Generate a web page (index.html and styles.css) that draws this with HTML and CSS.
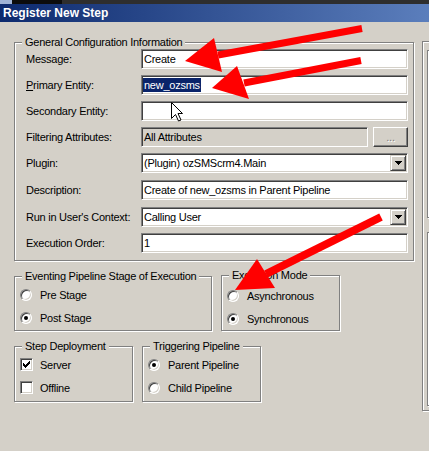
FILE: index.html
```html
<!DOCTYPE html>
<html>
<head>
<meta charset="utf-8">
<title>Register New Step</title>
<link rel="stylesheet" href="styles.css">
</head>
<body>
<div class="window">
  <div class="topstrip"></div>
  <div class="titlebar">Register New Step</div>
  <div class="client">
    <div class="leftcol">
      <fieldset class="group general">
        <legend>General Configuration Information</legend>
        <div class="rows">
          <div class="row"><span class="label">Message:</span><div class="field"><span class="val">Create</span></div></div>
          <div class="row"><span class="label"><u>P</u>rimary Entity:</span><div class="field"><span class="val sel">new_ozsms</span></div></div>
          <div class="row"><span class="label">Secondary Entity:</span><div class="field"></div></div>
          <div class="row"><span class="label">Filtering Attributes:</span>
            <div class="pair"><div class="field disabled"><span class="val">All Attributes</span></div><div class="btn">...</div></div>
          </div>
          <div class="row"><span class="label">Plugin:</span>
            <div class="field combo"><span class="val">(Plugin) ozSMScrm4.Main</span>
              <span class="dropbtn"><svg width="7" height="4" viewBox="0 0 7 4" shape-rendering="crispEdges"><path d="M0 0h7v1h-1v1h-1v1h-1v1h-1v-1h-1v-1h-1v-1h-1z" fill="#000"/></svg></span>
            </div>
          </div>
          <div class="row plus1"><span class="label">Description:</span><div class="field"><span class="val">Create of new_ozsms in Parent Pipeline</span></div></div>
          <div class="row plus1"><span class="label">Run in User's Context:</span>
            <div class="field combo"><span class="val">Calling User</span>
              <span class="dropbtn"><svg width="7" height="4" viewBox="0 0 7 4" shape-rendering="crispEdges"><path d="M0 0h7v1h-1v1h-1v1h-1v1h-1v-1h-1v-1h-1v-1h-1z" fill="#000"/></svg></span>
            </div>
          </div>
          <div class="row"><span class="label">Execution Order:</span><div class="field"><span class="val">1</span></div></div>
        </div>
      </fieldset>

      <div class="grouprow">
        <fieldset class="group eventing">
          <legend>Eventing Pipeline Stage of Execution</legend>
          <div class="opts">
            <div class="opt"><span class="radio"></span><span>Pre Stage</span></div>
            <div class="opt"><span class="radio on"></span><span>Post Stage</span></div>
          </div>
        </fieldset>
        <fieldset class="group execmode">
          <legend>Execution Mode</legend>
          <div class="opts">
            <div class="opt"><span class="radio"></span><span>Asynchronous</span></div>
            <div class="opt"><span class="radio on"></span><span>Synchronous</span></div>
          </div>
        </fieldset>
      </div>

      <div class="grouprow">
        <fieldset class="group small">
          <legend>Step Deployment</legend>
          <div class="opts">
            <div class="opt"><span class="check"><svg width="7" height="7" viewBox="0 0 7 7" shape-rendering="crispEdges"><path d="M6 0h1v1h-1z M5 1h2v1h-2z M0 2h1v1h-1z M4 2h3v1h-3z M0 3h2v1h-2z M3 3h3v1h-3z M0 4h5v1h-5z M1 5h3v1h-3z M2 6h1v1h-1z" fill="#000"/></svg></span><span>Server</span></div>
            <div class="opt"><span class="check"></span><span>Offline</span></div>
          </div>
        </fieldset>
        <fieldset class="group small">
          <legend>Triggering Pipeline</legend>
          <div class="opts">
            <div class="opt"><span class="radio on"></span><span>Parent Pipeline</span></div>
            <div class="opt"><span class="radio"></span><span>Child Pipeline</span></div>
          </div>
        </fieldset>
      </div>
    </div>

    <div class="rightpanel">
      <div class="subbox"></div>
      <div class="subbox b2"></div>
    </div>
  </div>

  <svg class="annot" width="429" height="451" viewBox="0 0 429 451">
    <g fill="#ff0000" stroke="#ff0000">
      <line x1="362" y1="28.5" x2="218" y2="55" stroke-width="7"/>
      <polygon points="185,61 214,38 222,72" stroke="none"/>
      <line x1="361" y1="60.5" x2="244" y2="83" stroke-width="7"/>
      <polygon points="212,88 237,66 249,99" stroke="none"/>
      <line x1="381" y1="217" x2="266" y2="274" stroke-width="8"/>
      <polygon points="235,290 257,259 275,288" stroke="none"/>
    </g>
    <polygon points="171.5,102.5 171.5,118.5 175.5,114.5 178.5,121 181,120 178,113.5 182.5,113.5" fill="#fff" stroke="#000" stroke-width="1" stroke-linejoin="miter"/>
  </svg>
</div>
</body>
</html>
```

FILE: styles.css
```css
html, body {
  margin: 0;
  padding: 0;
  width: 429px;
  height: 451px;
  overflow: hidden;
  background: #d4d0c8;
}

body {
  font-family: "Liberation Sans", Arial, sans-serif;
  font-size: 11px;
  letter-spacing: -0.25px;
  color: #000;
}

.window {
  position: relative;
  width: 429px;
  height: 451px;
  overflow: hidden;
  background: #d4d0c8;
}

.topstrip {
  height: 4px;
  background: linear-gradient(to right, #9fb3d6 0, #9fb3d6 12px, #0c0c0c 12px, #0c0c0c 62px, #2e2e2e 62px);
}

.titlebar {
  height: 18px;
  line-height: 18px;
  padding-left: 3px;
  color: #fff;
  font-weight: bold;
  font-size: 12px;
  letter-spacing: 0;
  background: linear-gradient(to right, #0d2a6e, #5b7ebc);
}

.client {
  display: flex;
  gap: 8px;
  padding: 14px 0 0 14px;
}

.leftcol {
  width: 400px;
  flex: none;
  display: flex;
  flex-direction: column;
}

.group {
  margin: 0;
  padding: 0 5px 0 7px;
  min-width: 0;
  box-sizing: border-box;
  border: 1px solid #808080;
  box-shadow: inset 1px 1px 0 #fff, 1px 1px 0 #fff;
}

.group > legend {
  padding: 0 3px;
  height: 13px;
  line-height: 13px;
  background: #d4d0c8;
}

.general {
  width: 400px;
  padding-bottom: 7px;
}

.rows {
  display: flex;
  flex-direction: column;
  gap: 6px;
  margin-left: 4px;
}

.row {
  display: grid;
  grid-template-columns: 115px 267px;
  height: 20px;
  align-items: center;
}

.row.plus1 {
  margin-top: 1px;
}

.field {
  height: 20px;
  box-sizing: border-box;
  border: 1px solid;
  border-color: #808080 #fff #fff #808080;
  box-shadow: inset 1px 1px 0 #404040, inset -1px -1px 0 #d4d0c8;
  background: #fff;
  display: flex;
  align-items: center;
  padding: 0 2px;
  white-space: nowrap;
  overflow: hidden;
}

.field.disabled {
  background: #d4d0c8;
}

.field.combo {
  padding-right: 1px;
}

.sel {
  background: #0a246a;
  color: #fff;
  line-height: 14px;
  margin-left: -1px;
  padding: 0 1px;
}

.dropbtn {
  margin-left: auto;
  width: 16px;
  height: 16px;
  box-sizing: border-box;
  flex: none;
  border: 1px solid;
  border-color: #d4d0c8 #404040 #404040 #d4d0c8;
  box-shadow: inset 1px 1px 0 #fff, inset -1px -1px 0 #808080;
  background: #d4d0c8;
  display: flex;
  align-items: center;
  justify-content: center;
}

.pair {
  display: grid;
  grid-template-columns: 1fr 35px;
  gap: 5px;
}

.btn {
  height: 20px;
  box-sizing: border-box;
  border: 1px solid;
  border-color: #fff #404040 #404040 #fff;
  box-shadow: inset -1px -1px 0 #808080, inset 1px 1px 0 #d4d0c8;
  background: #d4d0c8;
  color: #808080;
  text-shadow: 1px 1px 0 #fff;
  display: flex;
  align-items: center;
  justify-content: center;
}

.grouprow {
  display: flex;
  align-items: flex-start;
  gap: 9px;
  margin-top: 9px;
}

.eventing {
  width: 198px;
  padding-bottom: 1px;
}

.execmode {
  width: 119px;
  margin-top: -1px;
}

.execmode .opts {
  padding-top: 2px;
}

.small {
  width: 119px;
  padding-bottom: 2px;
}

.opts {
  display: flex;
  flex-direction: column;
  margin-left: -2px;
}

.opt {
  display: flex;
  align-items: center;
  height: 23px;
  white-space: nowrap;
}

.radio {
  flex: none;
  width: 12px;
  height: 12px;
  box-sizing: border-box;
  border-radius: 50%;
  border: 1px solid;
  border-color: #808080 #fff #fff #808080;
  box-shadow: inset 1px 1px 0 #404040, inset -1px -1px 0 #d4d0c8;
  background: #fff;
  margin-right: 8px;
  display: flex;
  align-items: center;
  justify-content: center;
}

.radio.on::after {
  content: "";
  width: 4px;
  height: 4px;
  border-radius: 50%;
  background: #000;
}

.check {
  flex: none;
  width: 13px;
  height: 13px;
  box-sizing: border-box;
  border: 1px solid;
  border-color: #808080 #fff #fff #808080;
  box-shadow: inset 1px 1px 0 #404040, inset -1px -1px 0 #d4d0c8;
  background: #fff;
  margin-right: 7px;
  display: flex;
  align-items: center;
  justify-content: center;
}

.check svg {
  display: block;
}

.rightpanel {
  flex: none;
  width: 200px;
  height: 370px;
  margin-top: 5px;
  box-sizing: border-box;
  border: 1px solid #808080;
  box-shadow: inset 1px 1px 0 #fff, 1px 1px 0 #fff;
  padding: 8px 0 0 4px;
}

.subbox {
  height: 168px;
  box-sizing: border-box;
  border: 1px solid #808080;
  box-shadow: inset 1px 1px 0 #fff, 1px 1px 0 #fff;
}

.subbox.b2 {
  margin-top: 14px;
  height: 174px;
}

.annot {
  position: absolute;
  left: 0;
  top: 0;
  pointer-events: none;
}
```
